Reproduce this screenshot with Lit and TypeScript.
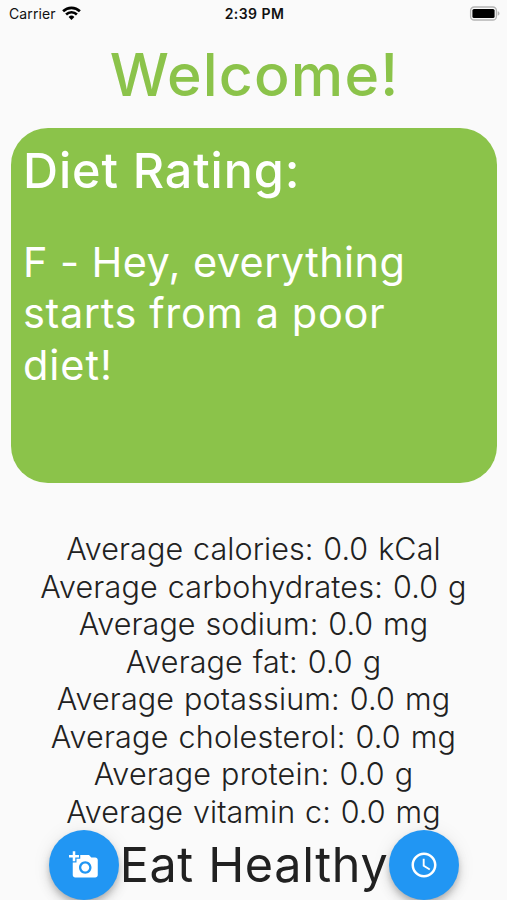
import { LitElement, html, css } from "lit";
import { customElement } from "lit/decorators.js";

interface Line {
  text: string;
  tracking: number;
}

const VERDICT: Line[] = [
  { text: "F - Hey, everything", tracking: 0.4 },
  { text: "starts from a poor", tracking: 0.62 },
  { text: "diet!", tracking: 0.95 },
];

const AVERAGES: Line[] = [
  { text: "Average calories: 0.0 kCal", tracking: 0.08 },
  { text: "Average carbohydrates: 0.0 g", tracking: 0.18 },
  { text: "Average sodium: 0.0 mg", tracking: 0.07 },
  { text: "Average fat: 0.0 g", tracking: 0.12 },
  { text: "Average potassium: 0.0 mg", tracking: 0.15 },
  { text: "Average cholesterol: 0.0 mg", tracking: 0.21 },
  { text: "Average protein: 0.0 g", tracking: 0.17 },
  { text: "Average vitamin c: 0.0 mg", tracking: 0.07 },
];

const renderLine = (line: Line) =>
  html`<div style="letter-spacing:${line.tracking}px">${line.text}</div>`;

@customElement("status-bar")
export class StatusBar extends LitElement {
  static styles = css`
    :host {
      display: grid;
      grid-template-columns: 1fr auto 1fr;
      align-items: center;
      height: 27px;
      padding: 0 7px 0 9px;
      font-size: 14px;
      line-height: 17px;
      color: #111;
    }
    .carrier {
      display: flex;
      align-items: center;
      gap: 6px;
      letter-spacing: 0.12px;
    }
    .wifi {
      display: block;
      width: 19px;
      height: 14px;
      margin-top: -2px;
    }
    .time {
      font-weight: 600;
      letter-spacing: 0.45px;
    }
    .battery {
      display: block;
      justify-self: end;
      width: 31px;
      height: 15px;
      margin-top: -1px;
    }
  `;

  render() {
    return html`
      <div class="carrier">
        <span>Carrier</span>
        <svg class="wifi" viewBox="0 0 19 14" fill="none" stroke="#000" stroke-width="2.6">
          <path d="M1.1 5.3a12 12 0 0 1 16.8 0" />
          <path d="M4.1 8.5a7.7 7.7 0 0 1 10.8 0" />
          <path d="M9.5 13.9l-2.9-2.9a4.1 4.1 0 0 1 5.8 0z" fill="#000" stroke="none" />
        </svg>
      </div>
      <div class="time">2:39 PM</div>
      <svg class="battery" viewBox="0 0 31 15">
        <rect x="1.6" y="1" width="25.8" height="13" rx="3.6" fill="#fafafa" stroke="#b4b4b4" stroke-width="1.3" />
        <rect x="3.4" y="3" width="22.2" height="9" rx="1.6" fill="#000" />
        <path d="M28.7 5.3c1.2.4 1.8 1.2 1.8 2.2s-.6 1.8-1.8 2.2z" fill="#b4b4b4" />
      </svg>
    `;
  }
}

@customElement("round-button")
export class RoundButton extends LitElement {
  static styles = css`
    :host {
      display: flex;
      flex: none;
      align-items: center;
      justify-content: center;
      width: 70px;
      height: 70px;
      border-radius: 50%;
      background: #2196f3;
      box-shadow: 0 4px 6px -1px rgba(0, 0, 0, 0.2), 0 7px 12px rgba(0, 0, 0, 0.13),
        0 1px 20px rgba(0, 0, 0, 0.07);
    }
  `;

  render() {
    return html`<slot></slot>`;
  }
}

@customElement("app-root")
export class AppRoot extends LitElement {
  static styles = css`
    :host {
      display: flex;
      flex-direction: column;
      box-sizing: border-box;
      height: 900px;
      overflow: hidden;
      background: #fafafa;
      color: #212121;
      font-family: Inter, "Liberation Sans", sans-serif;
    }
    .welcome {
      margin: 12px 0 0 2px;
      text-align: center;
      font-size: 59px;
      line-height: 72px;
      font-weight: 500;
      letter-spacing: 1.15px;
      color: #8bc34a;
    }
    .card {
      box-sizing: border-box;
      height: 355px;
      margin: 17px 10px 0 11px;
      padding: 13px 12px 0;
      border-radius: 37px;
      background: #8bc34a;
      color: #fff;
    }
    .rating {
      font-size: 48.5px;
      line-height: 60px;
      font-weight: 500;
      letter-spacing: 0.9px;
    }
    .verdict {
      margin-top: 35.5px;
      font-size: 41.5px;
      line-height: 51.5px;
    }
    .averages {
      margin-top: 47px;
      text-align: center;
      font-size: 30.5px;
      line-height: 37.5px;
      font-weight: 300;
      word-spacing: 1.2px;
    }
    .actions {
      display: flex;
      align-items: center;
      justify-content: center;
      height: 70px;
    }
    .brand {
      box-sizing: border-box;
      width: 270px;
      padding-left: 1px;
      text-align: center;
      white-space: nowrap;
      font-size: 48.5px;
      line-height: 60px;
      letter-spacing: 0.65px;
    }
    .icon {
      display: block;
      width: 30px;
      height: 30px;
      fill: #fff;
    }
  `;

  render() {
    return html`
      <status-bar></status-bar>
      <div class="welcome">Welcome!</div>
      <div class="card">
        <div class="rating">Diet Rating:</div>
        <div class="verdict">${VERDICT.map(renderLine)}</div>
      </div>
      <div class="averages">${AVERAGES.map(renderLine)}</div>
      <div class="actions">
        <round-button>
          <svg class="icon" viewBox="0 0 24 24">
            <path
              d="M3 4V1h2v3h3v2H5v3H3V6H0V4h3zm3 6V7h3V4h7l1.83 2H21c1.1 0 2 .9 2 2v12c0 1.1-.9 2-2 2H5c-1.1 0-2-.9-2-2V10h3zm7 9c2.76 0 5-2.24 5-5s-2.24-5-5-5-5 2.24-5 5 2.24 5 5 5zm-3.2-5c0 1.77 1.43 3.2 3.2 3.2s3.2-1.43 3.2-3.2-1.43-3.2-3.2-3.2-3.2 1.43-3.2 3.2z"
            />
          </svg>
        </round-button>
        <div class="brand">Eat Healthy</div>
        <round-button>
          <svg class="icon" viewBox="0 0 24 24">
            <path
              d="M11.99 2C6.47 2 2 6.48 2 12s4.47 10 9.99 10C17.52 22 22 17.52 22 12S17.52 2 11.99 2zM12 20c-4.42 0-8-3.58-8-8s3.58-8 8-8 8 3.58 8 8-3.58 8-8 8zm.5-13H11v6l5.25 3.15.75-1.23-4.5-2.67z"
            />
          </svg>
        </round-button>
      </div>
    `;
  }
}
